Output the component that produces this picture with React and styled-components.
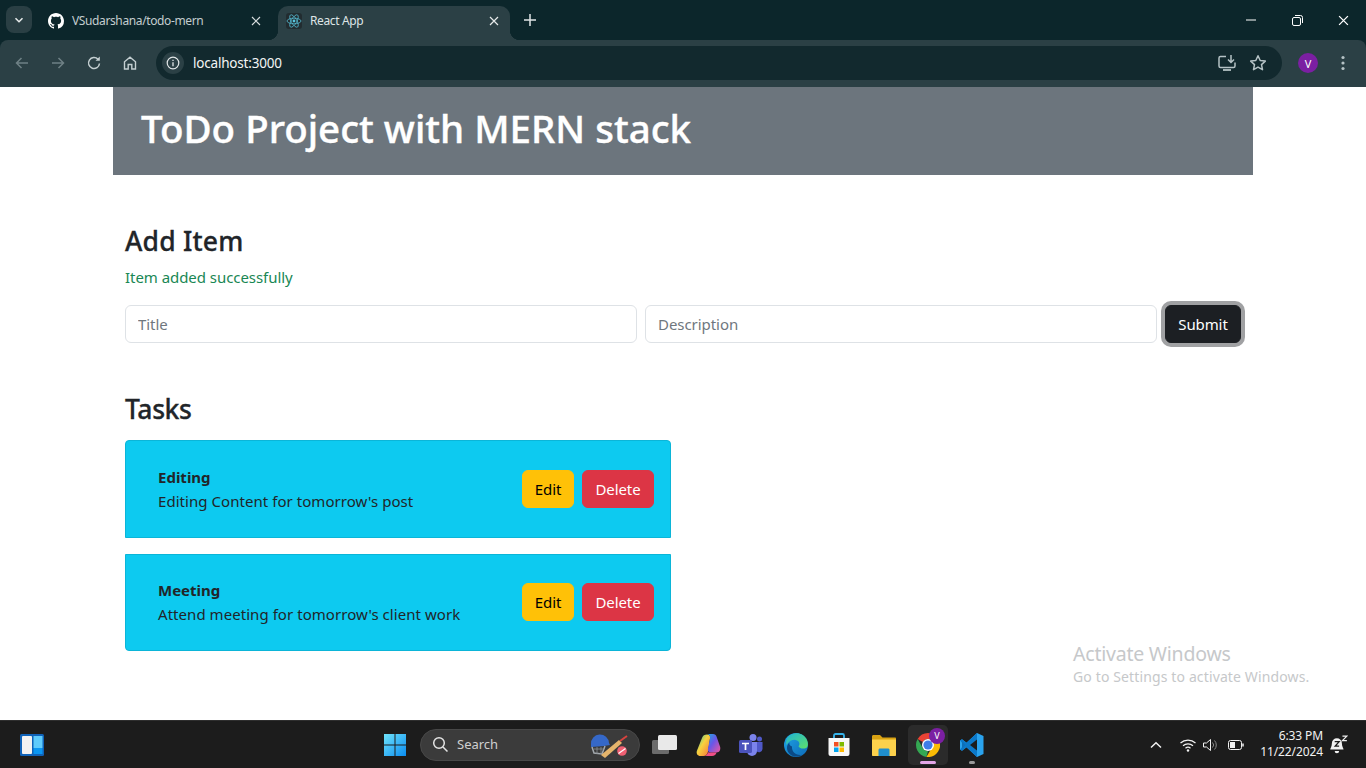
import React from "react";
import styled, { createGlobalStyle } from "styled-components";

const Global = createGlobalStyle`
  html, body { margin: 0; padding: 0; height: 100%; overflow: hidden; background: #fff; }
  * { box-sizing: border-box; }
  body { font-family: "Noto Sans", "Open Sans", "Liberation Sans", sans-serif; color: #212529; }
`;

const Screen = styled.div`
  width: 1366px; height: 768px; display: flex; flex-direction: column; position: relative; overflow: hidden;
`;

/* ---------- browser chrome ---------- */
const Chrome = styled.div`flex: 0 0 87px; background: #0c262b; display: flex; flex-direction: column;`;
const TabStrip = styled.div`height: 40px; display: flex; align-items: flex-end; padding-left: 6px; position: relative;`;
const TabSearch = styled.div`
  width: 26px; height: 27px; margin-bottom: 7px; border-radius: 8px; background: #2a3f44;
  display: flex; align-items: center; justify-content: center;
`;
const Tab = styled.div`
  position: relative; height: 34px; width: ${p => p.$w}px; margin-left: ${p => p.$ml}px;
  display: flex; align-items: center; padding: 0 8px 5px 8px;
  background: ${p => (p.$active ? "#2b4045" : "transparent")};
  border-radius: 10px 10px 0 0;
  color: ${p => (p.$active ? "#dfe5e6" : "#c4cdcf")};
  ${p => p.$active && `
    &::before, &::after { content: ""; position: absolute; bottom: 0; width: 10px; height: 10px; }
    &::before { left: -10px; background: radial-gradient(circle at 0 0, transparent 10px, #2b4045 10.5px); }
    &::after { right: -10px; background: radial-gradient(circle at 100% 0, transparent 10px, #2b4045 10.5px); }
  `}
`;
const TabIcon = styled.span`
  width: 16px; height: 16px; flex: none; margin-right: 8px; display: flex; align-items: center; justify-content: center;
  ${p => p.$tile && `background:#222c30;border-radius:3px;`}
`;
const TabTitle = styled.span`flex: 1; font: 12px/16px "Noto Sans", sans-serif; white-space: nowrap; letter-spacing: -0.38px;`;
const NewTab = styled.div`margin: 0 0 12px 12px; width: 16px; height: 16px; display: flex;`;
const WinControls = styled.div`margin-left: auto; display: flex; height: 40px;`;
const WinButton = styled.div`width: 46px; display: flex; align-items: center; justify-content: center;`;

const Toolbar = styled.div`
  height: 47px; background: #2b4045; border-radius: 8px 8px 0 0; display: flex; align-items: center; padding: 0 0 1px 4px;
`;
const NavButton = styled.div`width: 36px; height: 34px; display: flex; align-items: center; justify-content: center;`;
const Omnibox = styled.div`
  margin-left: 8px; width: 1126px; height: 34px; border-radius: 17px; background: #12292e;
  display: flex; align-items: center; padding: 0 12px 0 6px; color: #fff;
`;
const InfoChip = styled.div`
  width: 22px; height: 22px; border-radius: 50%; background: #2b4045; display: flex; align-items: center; justify-content: center; margin-right: 9px;
`;
const Url = styled.span`font: 13.5px/18px "Noto Sans", sans-serif; color: #f2f5f5; letter-spacing: -0.2px;`;
const OmniRight = styled.div`margin-left: auto; display: flex; align-items: center; gap: 11px; padding-right: 2px;`;
const Avatar = styled.div`
  width: ${p => p.$s}px; height: ${p => p.$s}px; border-radius: 50%; background: #7b1fa2; color: #fff;
  display: flex; align-items: center; justify-content: center; font: ${p => p.$f}px/1 "Noto Sans", sans-serif; flex: none;
`;
const ToolbarEnd = styled.div`display: flex; align-items: center; margin-left: 16px; gap: 17px;`;

/* ---------- page ---------- */
const Page = styled.main`flex: 1; background: #fff; display: flex; justify-content: center;`;
const Container = styled.div`width: 1140px;`;
const Banner = styled.header`
  height: 88px; background: #6c757d; color: #fff; padding: 0 28px; display: flex; align-items: center;
`;
const BannerTitle = styled.h1`
  margin: 0 0 6px; font: 500 38.5px/48px "Noto Sans", sans-serif; letter-spacing: 0; -webkit-text-stroke: 0.4px #fff;
`;
const Body = styled.div`padding: 48px 12px 0;`;
const SectionTitle = styled.h3`
  margin: 0; font: 500 26.5px/36px "Noto Sans", sans-serif; color: #212529; letter-spacing: ${p => p.$ls}px; -webkit-text-stroke: 0.3px #212529;
`;
const Notice = styled.p`margin: 6px 0 0; height: 24px; font: 15px/24px "Noto Sans", sans-serif; color: #198754; letter-spacing: -0.05px;`;
const FormRow = styled.form`display: flex; gap: 8px; margin-top: 16px; margin-bottom: 48px;`;
const Input = styled.input`
  flex: 1; min-width: 0; height: 38px; padding: 6px 12px; border: 1px solid #dee2e6; border-radius: 6px; background: #fff;
  font: 15px/24px "Noto Sans", sans-serif; letter-spacing: -0.05px;
  &::placeholder { color: #6f777e; opacity: 1; }
`;
const Button = styled.button`
  height: 38px; padding: 0; width: ${p => p.$w}px; flex: none; border: 1px solid ${p => p.$bg}; border-radius: 6px;
  background: ${p => p.$bg}; color: ${p => p.$fg};
  font: 15px/24px "Noto Sans", sans-serif; letter-spacing: -0.1px;
  ${p => p.$ring && `box-shadow: 0 0 0 4px #a0a1a3;`}
`;
const TaskList = styled.div`width: 546px; margin-top: 13px; display: flex; flex-direction: column; gap: 16px;`;
const TaskCard = styled.div`
  height: ${p => p.$h}px; background: #0dcaf0; border: 1px solid #0bb5d8; border-radius: ${p => p.$r};
  display: flex; align-items: center; justify-content: space-between; padding: 0 16px ${p => p.$pb}px 32px;
`;
const TaskText = styled.div`display: flex; flex-direction: column; color: #212529;`;
const TaskName = styled.strong`font: 700 15px/24px "Noto Sans", sans-serif; letter-spacing: 0;`;
const TaskDesc = styled.span`font: 15px/24px "Noto Sans", sans-serif; letter-spacing: 0.05px;`;
const TaskActions = styled.div`display: flex; gap: 8px;`;
const Watermark = styled.div`
  position: absolute; left: 1073px; top: 641px; color: #c6c8ca; font-family: "Noto Sans", sans-serif;
  & > div:first-child { font-size: 19.5px; line-height: 25px; letter-spacing: -0.22px; }
  & > div:last-child { font-size: 14px; line-height: 19px; letter-spacing: 0.13px; margin-top: 1px; }
`;

/* ---------- taskbar ---------- */
const Taskbar = styled.footer`
  flex: 0 0 48px; background: #1c1c1c; border-top: 1px solid #2e2e2e; display: flex; align-items: center; position: relative;
`;
const Widgets = styled.div`margin-left: 20px; width: 24px; height: 24px;`;
const Center = styled.div`margin-left: 339px; display: flex; align-items: center;`;
const SearchPill = styled.div`
  margin-left: 13px; width: 220px; height: 32px; border-radius: 16px; background: #3b3b3b; border: 1px solid #484848;
  display: flex; align-items: center; padding: 0 10px 0 11px; color: #cfcfcf; font: 13px/1 "Noto Sans", sans-serif; gap: 8px;
`;
const PillArt = styled.div`margin-left: auto; width: 40px; height: 28px;`;
const Apps = styled.div`margin-left: 10px; display: flex; align-items: center;`;
const AppSlot = styled.div`
  width: ${p => p.$w || 40}px; height: 40px; margin-left: ${p => p.$gap || 0}px; display: flex; align-items: center; justify-content: center; position: relative;
  border-radius: 5px; ${p => p.$active && `background:#2b2b2b;`}
`;
const RunDot = styled.span`
  position: absolute; bottom: 1px; left: 50%; transform: translateX(-50%); height: 3px; border-radius: 2px;
  width: ${p => p.$w}px; background: ${p => p.$c};
`;
const ChromeBadge = styled(Avatar)`position: absolute; right: 3px; top: 3px;`;
const Tray = styled.div`position: absolute; left: 1148px; top: 0; height: 47px; display: flex; align-items: center;`;
const TrayIcons = styled.div`display: flex; align-items: center; gap: 6px; margin-left: 16px;`;
const Clock = styled.div`
  width: 72px; margin-left: 5px; margin-top: -2px; text-align: right; color: #f2f2f2; font: 12px/16px "Noto Sans", sans-serif; letter-spacing: -0.1px;
`;

/* ---------- icons ---------- */
const I = ({ s = 16, v = "0 0 16 16", children, ...r }) => (
  <svg width={s} height={s} viewBox={v} fill="none" {...r}>{children}</svg>
);
const Close = ({ c = "#d6dcdd", s = 10 }) => <I s={s} v="0 0 10 10"><path d="M1 1l8 8M9 1L1 9" stroke={c} strokeWidth="1.2" /></I>;
const GitHub = () => <I><path fill="#fff" d="M8 0C3.58 0 0 3.58 0 8c0 3.54 2.29 6.53 5.47 7.59.4.07.55-.17.55-.38 0-.19-.01-.82-.01-1.49-2.01.37-2.53-.49-2.69-.94-.09-.23-.48-.94-.82-1.13-.28-.15-.68-.52-.01-.53.63-.01 1.08.58 1.23.82.72 1.21 1.87.87 2.33.66.07-.52.28-.87.51-1.07-1.78-.2-3.64-.89-3.64-3.95 0-.87.31-1.59.82-2.15-.08-.2-.36-1.02.08-2.12 0 0 .67-.21 2.2.82.64-.18 1.32-.27 2-.27s1.36.09 2 .27c1.53-1.04 2.2-.82 2.2-.82.44 1.1.16 1.92.08 2.12.51.56.82 1.27.82 2.15 0 3.07-1.87 3.75-3.65 3.95.29.25.54.73.54 1.48 0 1.07-.01 1.93-.01 2.2 0 .21.15.46.55.38A8.01 8.01 0 0016 8c0-4.42-3.58-8-8-8z" /></I>;
const ReactLogo = () => (
  <I v="0 0 16 16">
    <circle cx="8" cy="8" r="1.4" fill="#58c4dc" />
    <g stroke="#58c4dc" strokeWidth=".7">
      <ellipse cx="8" cy="8" rx="7" ry="2.8" />
      <ellipse cx="8" cy="8" rx="7" ry="2.8" transform="rotate(60 8 8)" />
      <ellipse cx="8" cy="8" rx="7" ry="2.8" transform="rotate(120 8 8)" />
    </g>
  </I>
);

const Win11 = () => (
  <I s={24} v="0 0 24 24">
    <defs><linearGradient id="w" x1="0" y1="0" x2="1" y2="1"><stop offset="0" stopColor="#6fe3fb" /><stop offset="1" stopColor="#0a8cf0" /></linearGradient></defs>
    <path fill="url(#w)" d="M1 1h10.5v10.5H1zM12.5 1H23v10.500H12.500zM1 12.500h10.500V23H1zM12.500 12.500H23V23H12.500z" />
  </I>
);
const Copilot = () => (
  <I s={26} v="0 0 26 26">
    <defs>
      <linearGradient id="c1" x1="0" y1="0" x2="1" y2="1"><stop offset="0" stopColor="#1fa8e0" /><stop offset=".45" stopColor="#6a56e8" /><stop offset="1" stopColor="#f0569c" /></linearGradient>
      <linearGradient id="c2" x1="0" y1="0" x2="1" y2="1"><stop offset="0" stopColor="#22c3b0" /><stop offset=".45" stopColor="#f7d23e" /><stop offset="1" stopColor="#f5703a" /></linearGradient>
    </defs>
    <path fill="url(#c2)" d="M7 6C7.800 3.500 9.500 2.500 12 2.500c2.500 0 3.500 1.500 3 4L13 19.500c-.4 2.700-2 4.500-4.500 4.500h-3C2.500 24 .9 21.500 2 18.500z" />
    <path fill="url(#c1)" d="M12.500 2H18c2 0 3 1 3.500 2.500L25 14.500c1 3-.5 6-3.500 6h-5.500c-2.500 0-3.500-1.500-3-4l2-10c.5-2.300-1-4-2.500-4.500z" />
    <path fill="#ef4f86" d="M16 20.500h5.500c-.5 2-2 3.500-4.500 3.500H9c2 0 3.500-1.500 4-3.700.7.200 1.800.2 3 .2z" />
  </I>
);
const Teams = () => (
  <I s={26} v="0 0 26 26">
    <circle cx="15" cy="5.500" r="3.500" fill="#7b83eb" /><circle cx="21.500" cy="7" r="2.500" fill="#5059c9" />
    <path fill="#5059c9" d="M18 10h6.500v7a3.500 3.500 0 01-6.500 1.500z" />
    <path fill="#7b83eb" d="M9 10h10v9a5 5 0 01-10 0z" />
    <rect x="1" y="8" width="13" height="13" rx="1.500" fill="#4b53bc" />
    <path stroke="#fff" strokeWidth="1.700" d="M4 11.500h7M7.500 11.500V18" />
  </I>
);
const Edge = () => (
  <I s={26} v="0 0 26 26">
    <defs>
      <linearGradient id="e1" x1="0" y1="0" x2="1" y2="1"><stop offset="0" stopColor="#1fa5e6" /><stop offset="1" stopColor="#0e6bb8" /></linearGradient>
      <linearGradient id="e2" x1="0" y1="0" x2="1" y2="1"><stop offset="0" stopColor="#1fb4d4" /><stop offset="1" stopColor="#5ee06a" /></linearGradient>
    </defs>
    <circle cx="13" cy="13" r="12" fill="url(#e1)" />
    <path fill="url(#e2)" d="M6 4c6-5 15-3 18 4 1.500 4 1 7-1 8-3 1.300-6.500.4-7.500-1.800 2-2.500.5-6-3-6.300C9 7.600 5.500 9.500 3.500 13 2.500 9.500 3.500 6 6 4z" />
    <path fill="#0b4a86" d="M9 14.500c-.5 5 4 9.500 10 8.300-2.500 1.700-6 2.400-9 1.200-3.500-1.300-6-4.500-6-8 0-2.500 1-4.500 2.500-5.500-.5 1.500 0 3 2.500 4z" />
  </I>
);
const Store = () => (
  <I s={26} v="0 0 26 26">
    <path d="M8 6V3.500C8 2.500 8.700 2 9.500 2h7c.8 0 1.500.5 1.500 1.500V6" stroke="#36b3ea" strokeWidth="1.800" />
    <path fill="#f7f7f7" d="M2.500 6h21v16a2 2 0 01-2 2h-17a2 2 0 01-2-2z" />
    <rect x="8" y="10" width="4.500" height="4.500" fill="#f25022" /><rect x="13.500" y="10" width="4.500" height="4.500" fill="#7fba00" />
    <rect x="8" y="15.500" width="4.500" height="4.500" fill="#00a4ef" /><rect x="13.500" y="15.500" width="4.500" height="4.500" fill="#ffb900" />
  </I>
);
const Folder = () => (
  <I s={26} v="0 0 26 26">
    <path fill="#d8a213" d="M1 4.500C1 3.500 1.700 3 2.500 3H9l2.500 2.500H24c.6 0 1 .4 1 1V10H1z" />
    <path fill="#fcd14c" d="M1 7.500h24V23c0 .6-.4 1-1 1H2c-.6 0-1-.4-1-1z" />
    <path fill="#1f8ecd" d="M7.500 18c0-1 .7-1.500 1.500-1.500h8c.8 0 1.500.5 1.500 1.500v6h-11z" />
  </I>
);
const ChromeLogo = () => (
  <I s={24} v="0 0 24 24">
    <path fill="#ea4335" d="M12 0A12 12 0 0122.390 6H12a6 6 0 00-5.200 3L1.610 6A12 12 0 0112 0z" />
    <path fill="#34a853" d="M1.610 6L6.800 15A6 6 0 0012 18l-1.600 5.900A12 12 0 011.610 6z" />
    <path fill="#fbbc04" d="M22.390 6A12 12 0 0110.400 23.900L15.600 15A6 6 0 0012 6z" />
    <circle cx="12" cy="12" r="6" fill="#fff" /><circle cx="12" cy="12" r="4.600" fill="#3f7de8" />
  </I>
);
const VSCode = () => (
  <I s={26} v="0 0 26 26">
    <path fill="#2aa3ee" d="M18 1l6.500 3v18L18 25 7.500 15.200 3 18.700 1 17.500V8.500l2-1.200 4.500 3.500z" />
    <path fill="#0b78c9" d="M18 1v24L7.500 15.200 3 18.700 1 17.500 5 13 1 8.500l2-1.200 4.500 3.500z" />
    <path fill="#1c1c1c" d="M18 7.500L11 13l7 5.500z" /><path fill="#0d6fb8" d="M3 9.800V16.200L6.300 13z" />
  </I>
);

function Task({ name, desc, h, r, pb }) {
  return (
    <TaskCard $h={h} $r={r} $pb={pb}>
      <TaskText>
        <TaskName>{name}</TaskName>
        <TaskDesc>{desc}</TaskDesc>
      </TaskText>
      <TaskActions>
        <Button type="button" $w={52} $bg="#ffc107" $fg="#000">Edit</Button>
        <Button type="button" $w={72} $bg="#dc3545" $fg="#fff">Delete</Button>
      </TaskActions>
    </TaskCard>
  );
}

export default function App() {
  return (
    <Screen>
      <Global />
      <Chrome>
        <TabStrip>
          <TabSearch>
            <I s={10} v="0 0 10 10"><path d="M1.500 3.200L5 6.700l3.500-3.500" stroke="#e6eaea" strokeWidth="1.600" /></I>
          </TabSearch>
          <Tab $w={232} $ml={8}>
            <TabIcon><GitHub /></TabIcon>
            <TabTitle>VSudarshana/todo-mern</TabTitle>
            <Close />
            <I s={3} />
          </Tab>
          <Tab $w={232} $ml={6} $active>
            <TabIcon $tile><ReactLogo /></TabIcon>
            <TabTitle>React App</TabTitle>
            <Close c="#e6eaea" />
            <I s={3} />
          </Tab>
          <NewTab>
            <I><path d="M8 2v12M2 8h12" stroke="#dfe5e6" strokeWidth="1.500" /></I>
          </NewTab>
          <WinControls>
            <WinButton><I s={10} v="0 0 10 10"><path d="M0 5h10" stroke="#fff" /></I></WinButton>
            <WinButton><I s={11} v="0 0 11 11"><rect x=".5" y="2.500" width="8" height="8" rx="1.500" stroke="#fff" /><path d="M3 .5h5.500a2 2 0 012 2V8" stroke="#fff" /></I></WinButton>
            <WinButton><Close c="#fff" s={11} /></WinButton>
          </WinControls>
        </TabStrip>
        <Toolbar>
          <NavButton><I><path d="M14 8H3M7.500 3L2.500 8l5 5" stroke="#6e8085" strokeWidth="1.500" /></I></NavButton>
          <NavButton><I><path d="M2 8h11M8.500 3l5 5-5 5" stroke="#6e8085" strokeWidth="1.500" /></I></NavButton>
          <NavButton><I><path d="M13.500 8.500A5.500 5.500 0 1112 4.200" stroke="#c4cfd1" strokeWidth="1.500" /><path d="M13.800 1.500v4.300H9.500z" fill="#c4cfd1" /></I></NavButton>
          <NavButton><I><path d="M2.500 14V6.800L8 2.200l5.500 4.600V14h-3.700V9.500H6.200V14z" stroke="#c4cfd1" strokeWidth="1.400" /></I></NavButton>
          <Omnibox>
            <InfoChip>
              <I s={14} v="0 0 14 14"><circle cx="7" cy="7" r="5.800" stroke="#e2e7e8" strokeWidth="1.200" /><path d="M7 6.200v4M7 3.800v1.300" stroke="#e2e7e8" strokeWidth="1.300" /></I>
            </InfoChip>
            <Url>localhost:3000</Url>
            <OmniRight>
              <I s={20} v="0 0 20 20"><path d="M9 3.500H3.500A1.500 1.500 0 002 5v8a1.500 1.500 0 001.500 1.500h13A1.500 1.500 0 0018 13V9.500" stroke="#b5c2c5" strokeWidth="1.500" /><path d="M6 17h8" stroke="#b5c2c5" strokeWidth="1.800" /><path d="M14 2v7M11 6.500L14 9.500l3-3" stroke="#b5c2c5" strokeWidth="1.500" /></I>
              <I s={20} v="0 0 20 20"><path d="M10 2.800l2.200 4.700 5.100.6-3.800 3.500 1 5.100-4.500-2.600-4.500 2.600 1-5.100-3.800-3.500 5.100-.6z" stroke="#b5c2c5" strokeWidth="1.500" strokeLinejoin="round" /></I>
            </OmniRight>
          </Omnibox>
          <ToolbarEnd>
            <Avatar $s={20} $f={11}>V</Avatar>
            <I s={16}><g fill="#b5c2c5"><circle cx="8" cy="2.500" r="1.600" /><circle cx="8" cy="8" r="1.600" /><circle cx="8" cy="13.500" r="1.600" /></g></I>
          </ToolbarEnd>
        </Toolbar>
      </Chrome>

      <Page>
        <Container>
          <Banner><BannerTitle>ToDo Project with MERN stack</BannerTitle></Banner>
          <Body>
            <SectionTitle $ls={0.2}>Add Item</SectionTitle>
            <Notice>Item added successfully</Notice>
            <FormRow>
              <Input placeholder="Title" />
              <Input placeholder="Description" />
              <Button type="button" $w={76} $bg="#1c1f23" $fg="#fff" $ring>Submit</Button>
            </FormRow>
            <SectionTitle $ls={-0.4}>Tasks</SectionTitle>
            <TaskList>
              <Task name="Editing" desc="Editing Content for tomorrow's post" h={98} r="4px 4px 0 0" pb={0} />
              <Task name="Meeting" desc="Attend meeting for tomorrow's client work" h={97} r="0 0 4px 4px" pb={2} />
            </TaskList>
          </Body>
        </Container>
      </Page>

      <Watermark>
        <div>Activate Windows</div>
        <div>Go to Settings to activate Windows.</div>
      </Watermark>

      <Taskbar>
        <Widgets>
          <I s={24} v="0 0 24 24">
            <rect width="24" height="22" y="1" rx="1.500" fill="#0f62b8" />
            <rect x="2" y="3" width="10" height="18" rx="1" fill="#f2f2f2" />
            <rect x="13.500" y="3" width="9" height="12" fill="#5fcbfb" />
            <rect x="13.500" y="15" width="9" height="6" fill="#0a96f2" />
          </I>
        </Widgets>
        <Center>
          <Win11 />
          <SearchPill>
            <I s={17} v="0 0 17 17"><circle cx="7" cy="7" r="5.300" stroke="#e4e4e4" strokeWidth="1.500" /><path d="M11 11l4.500 4.500" stroke="#e4e4e4" strokeWidth="1.500" /></I>
            <span>Search</span>
            <PillArt>
              <svg width="40" height="28" viewBox="0 0 40 28" fill="none">
                <path d="M2 13a9 9 0 0118 -1l1 2-6 1-13 1z" fill="#3568c8" />
                <path d="M3 16l2 6 8 1 3-8" stroke="#a4a9ae" strokeWidth="1.500" />
                <path d="M5 18h10M8 16v7M12 16v7" stroke="#8a8f94" strokeWidth=".8" />
                <path d="M12 24L30 9l3 3-17 15z" fill="#e6b56c" />
                <path d="M31 10l7-5" stroke="#d8433e" strokeWidth="2" />
                <circle cx="33" cy="20" r="4.800" fill="#ef5f72" />
                <path d="M29.500 22.500l7-5" stroke="#fff" strokeWidth="1.200" />
              </svg>
            </PillArt>
          </SearchPill>
          <Apps>
            <AppSlot $w={30}>
              <I s={26} v="0 0 26 26"><rect x="0" y="8" width="17" height="14" rx="1.500" fill="#6b6b6b" /><rect x="6" y="3" width="19" height="15" rx="1.500" fill="#e9e9e9" /></I>
            </AppSlot>
            <AppSlot $gap={8}><Copilot /></AppSlot>
            <AppSlot $gap={3}><Teams /></AppSlot>
            <AppSlot $gap={5}><Edge /></AppSlot>
            <AppSlot $gap={3}><Store /></AppSlot>
            <AppSlot $gap={5}><Folder /></AppSlot>
            <AppSlot $gap={4} $active>
              <ChromeLogo />
              <ChromeBadge $s={16} $f={9}>V</ChromeBadge>
              <RunDot $w={16} $c="#e3a6e8" />
            </AppSlot>
            <AppSlot $gap={4}>
              <VSCode />
              <RunDot $w={6} $c="#9a9a9a" />
            </AppSlot>
          </Apps>
        </Center>
        <Tray>
          <I s={16}><path d="M3 10.500L8 5.800l5 4.700" stroke="#f2f2f2" strokeWidth="1.500" /></I>
          <TrayIcons>
            <I s={16}><g stroke="#f2f2f2" strokeWidth="1.200"><path d="M.5 6a11 11 0 0115 0" /><path d="M3 8.800a7.500 7.500 0 0110 0" /><path d="M5.500 11.200a3.800 3.800 0 015 0" /></g><circle cx="8" cy="13.500" r="1.200" fill="#f2f2f2" /></I>
            <I s={16}><path d="M1.500 6h3l4-3.500v11l-4-3.500h-3z" stroke="#f2f2f2" /><path d="M10.500 5.500a3.500 3.500 0 010 5M12.500 3.500a6.500 6.500 0 010 9" stroke="#8a8a8a" /></I>
            <I s={20} v="0 0 20 20" style={{ marginLeft: 2 }}><rect x="2.500" y="5.500" width="13" height="9" rx="2" stroke="#f2f2f2" /><rect x="4" y="7" width="5" height="6" fill="#f2f2f2" /><path d="M17 8.500v3" stroke="#f2f2f2" strokeWidth="1.500" /></I>
          </TrayIcons>
          <Clock>
            <div>6:33 PM</div>
            <div>11/22/2024</div>
          </Clock>
          <I s={20} v="0 0 18 18" style={{ marginLeft: 5 }}>
            <path d="M8 3a4.500 4.500 0 00-4.500 4.500c0 3-1.500 4.500-1.500 5.500h12c0-1-1.500-2.500-1.500-5.500A4.500 4.500 0 008 3z" fill="#f2f2f2" />
            <path d="M6 14.500a2 2 0 004 0z" fill="#f2f2f2" />
            <path d="M6 6h4L6.500 10H10" stroke="#1c1c1c" strokeWidth="1.200" />
            <path d="M13 1h4l-4 4h4" stroke="#f2f2f2" strokeWidth="1.100" />
          </I>
        </Tray>
      </Taskbar>
    </Screen>
  );
}
